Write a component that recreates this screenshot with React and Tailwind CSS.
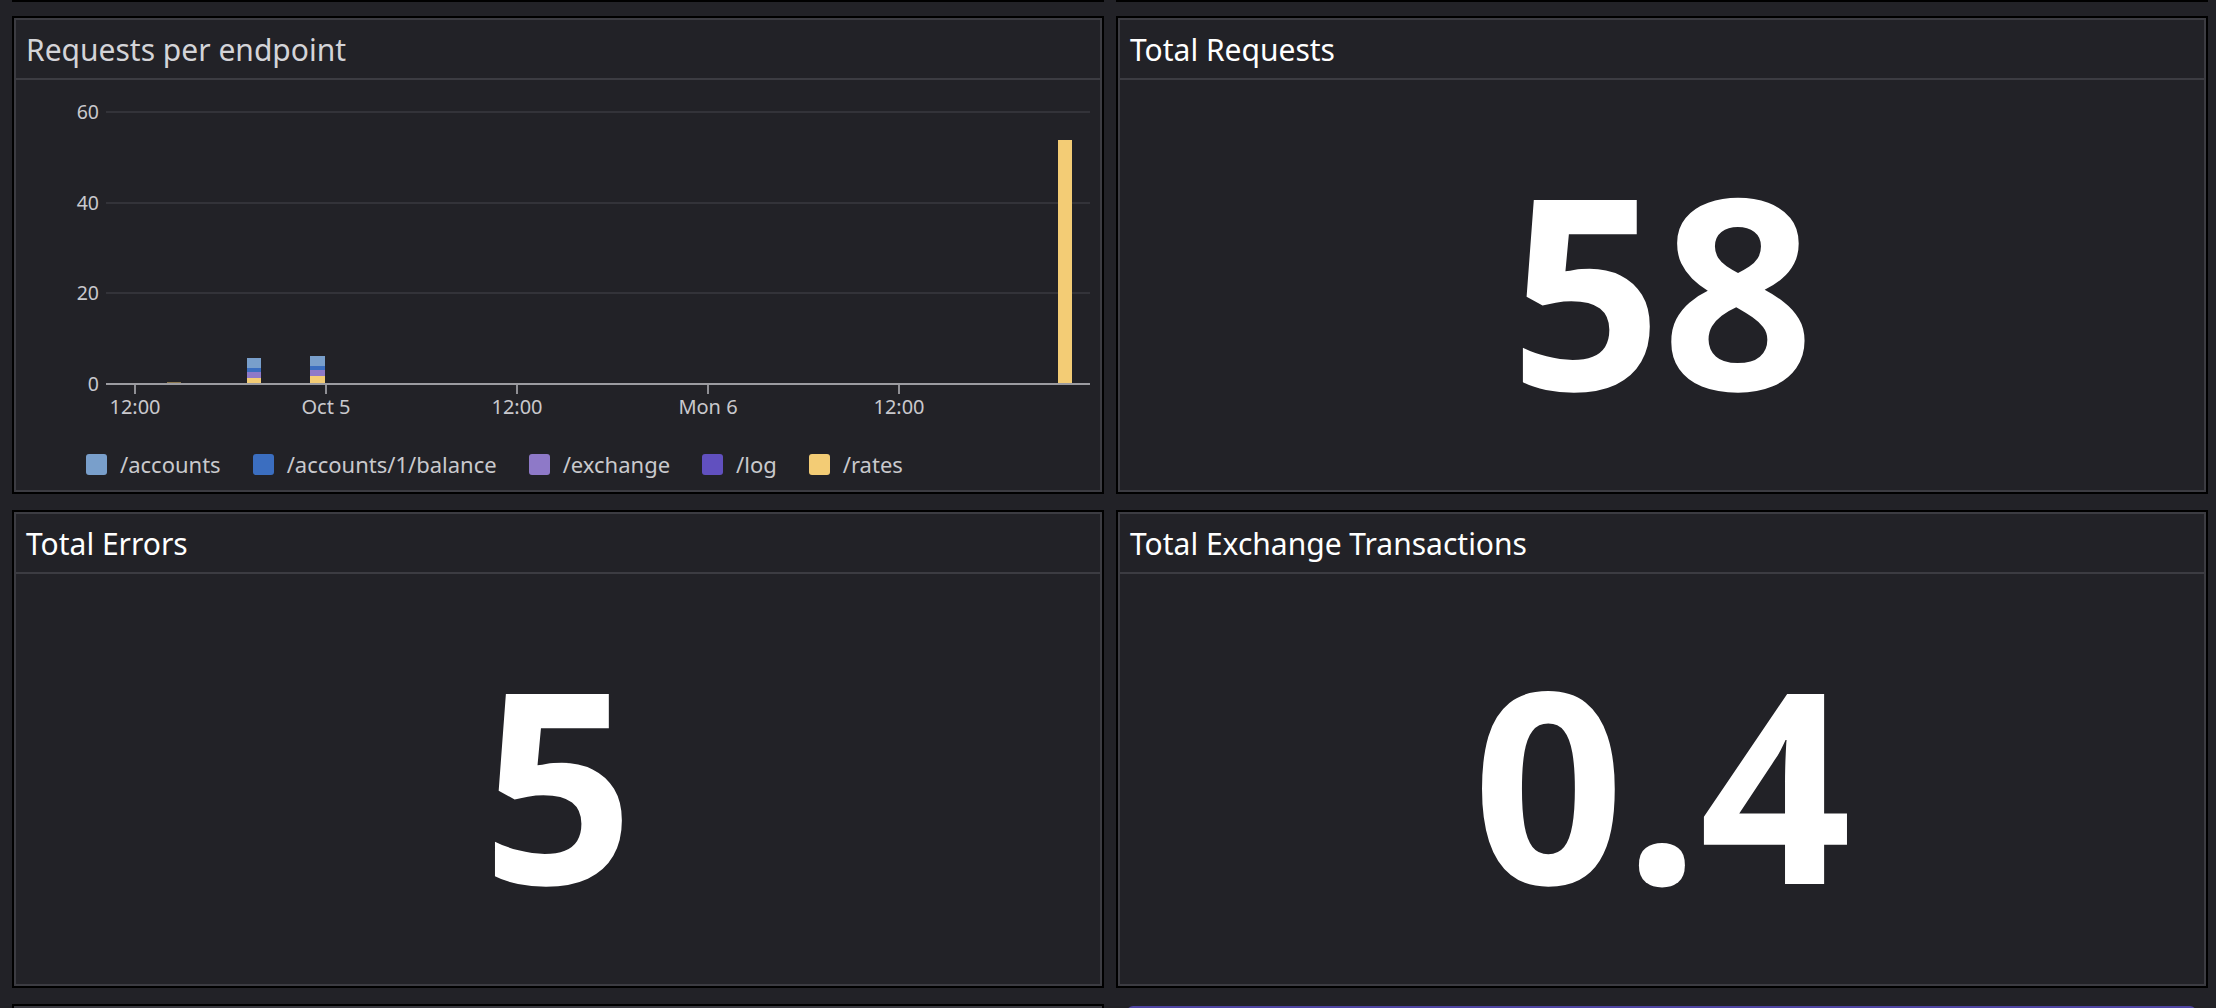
import React from "react";

const series = [
  { name: "/accounts", color: "#799fcb" },
  { name: "/accounts/1/balance", color: "#3b6ec0" },
  { name: "/exchange", color: "#8e79c8" },
  { name: "/log", color: "#6150bf" },
  { name: "/rates", color: "#f3cc75" },
];

// stacked bars, bottom -> top: rates, exchange, balance, accounts
const bars = [
  { x: 151, w: 14, segs: [["#f3cc75", 302.5, 304]] },
  {
    x: 231,
    w: 14,
    segs: [
      ["#f3cc75", 298, 304],
      ["#8e79c8", 292, 298],
      ["#3b6ec0", 288, 292],
      ["#799fcb", 278, 288],
    ],
  },
  {
    x: 294,
    w: 15,
    segs: [
      ["#f3cc75", 296, 304],
      ["#8e79c8", 290, 296],
      ["#3b6ec0", 286, 290],
      ["#799fcb", 276, 286],
    ],
  },
  { x: 1042, w: 14, segs: [["#f3cc75", 60, 304]] },
];

const yTicks = [
  { label: "60", y: 32 },
  { label: "40", y: 123 },
  { label: "20", y: 213 },
];

const xTicks = [
  { label: "12:00", x: 119 },
  { label: "Oct 5", x: 310 },
  { label: "12:00", x: 501 },
  { label: "Mon 6", x: 692 },
  { label: "12:00", x: 883 },
];

function Panel({ title, dim, children }) {
  return (
    <div className="h-[478px] border-2 border-black">
      <div className="flex h-full flex-col border-2 border-[#3c3c42]">
        <div
          className={`flex h-[60px] shrink-0 items-center border-b-2 border-[#3c3c42] px-[10px] text-[30px] ${
            dim ? "text-[#d4d4d8]" : "text-white"
          }`}
        >
          {title}
        </div>
        {children}
      </div>
    </div>
  );
}

function Stat({ value }) {
  return (
    <div className="flex flex-1 items-center justify-center pt-[4px]">
      <span className="text-[266px] font-bold leading-none text-white">{value}</span>
    </div>
  );
}

function Chart() {
  return (
    <div className="flex flex-1 flex-col">
      <svg width="1084" height="358" className="shrink-0">
        {yTicks.map((t) => (
          <g key={t.label}>
            <line x1="90" x2="1074" y1={t.y} y2={t.y} stroke="#3a3a40" strokeWidth="1.5" />
            <text x="83" y={t.y + 7} textAnchor="end" fontSize="19.5" fill="#c9c9cd">
              {t.label}
            </text>
          </g>
        ))}
        <text x="83" y="311" textAnchor="end" fontSize="19.5" fill="#c9c9cd">
          0
        </text>
        {bars.map((b, i) =>
          b.segs.map(([c, y1, y2], j) => (
            <rect key={`${i}-${j}`} x={b.x} width={b.w} y={y1} height={y2 - y1} fill={c} />
          ))
        )}
        <line x1="90" x2="1074" y1="304" y2="304" stroke="#9c9ca1" strokeWidth="2" />
        {xTicks.map((t, i) => (
          <g key={i}>
            <line x1={t.x} x2={t.x} y1="305" y2="314" stroke="#8f8f94" strokeWidth="2" />
            <text x={t.x} y="334" textAnchor="middle" fontSize="20" fill="#c9c9cd">
              {t.label}
            </text>
          </g>
        ))}
      </svg>
      <div className="flex flex-1 items-center gap-[32px] pl-[70px]">
        {series.map((s) => (
          <div key={s.name} className="flex items-center gap-[13px]">
            <span
              className="h-[21px] w-[21px] rounded-[3px]"
              style={{ backgroundColor: s.color }}
            />
            <span className="text-[22px] text-[#c9c9cd]">{s.name}</span>
          </div>
        ))}
      </div>
    </div>
  );
}

export default function App() {
  return (
    <div className="h-[1008px] w-[2216px] overflow-hidden bg-[#222227] pl-[12px] pr-[8px] font-['Noto_Sans',sans-serif]">
      <div className="grid grid-cols-2 gap-x-[12px]">
        <div className="h-[2px] bg-black" />
        <div className="h-[2px] bg-black" />
      </div>
      <div className="mt-[14px] grid grid-cols-2 gap-x-[12px] gap-y-[16px]">
        <Panel title="Requests per endpoint" dim>
          <Chart />
        </Panel>
        <Panel title="Total Requests">
          <Stat value="58" />
        </Panel>
        <Panel title="Total Errors">
          <Stat value="5" />
        </Panel>
        <Panel title="Total Exchange Transactions">
          <Stat value="0.4" />
        </Panel>
      </div>
      <div className="mt-[16px] grid grid-cols-2 gap-x-[12px]">
        <div className="h-[8px] border-x-2 border-t-2 border-black">
          <div className="h-full border-x-2 border-t-2 border-[#3c3c42]" />
        </div>
        <div className="flex pl-[11px] pr-[12px] pt-[2px]">
          <div className="h-[6px] flex-1 rounded-t-[6px] bg-[#4f45a3]" />
        </div>
      </div>
    </div>
  );
}
